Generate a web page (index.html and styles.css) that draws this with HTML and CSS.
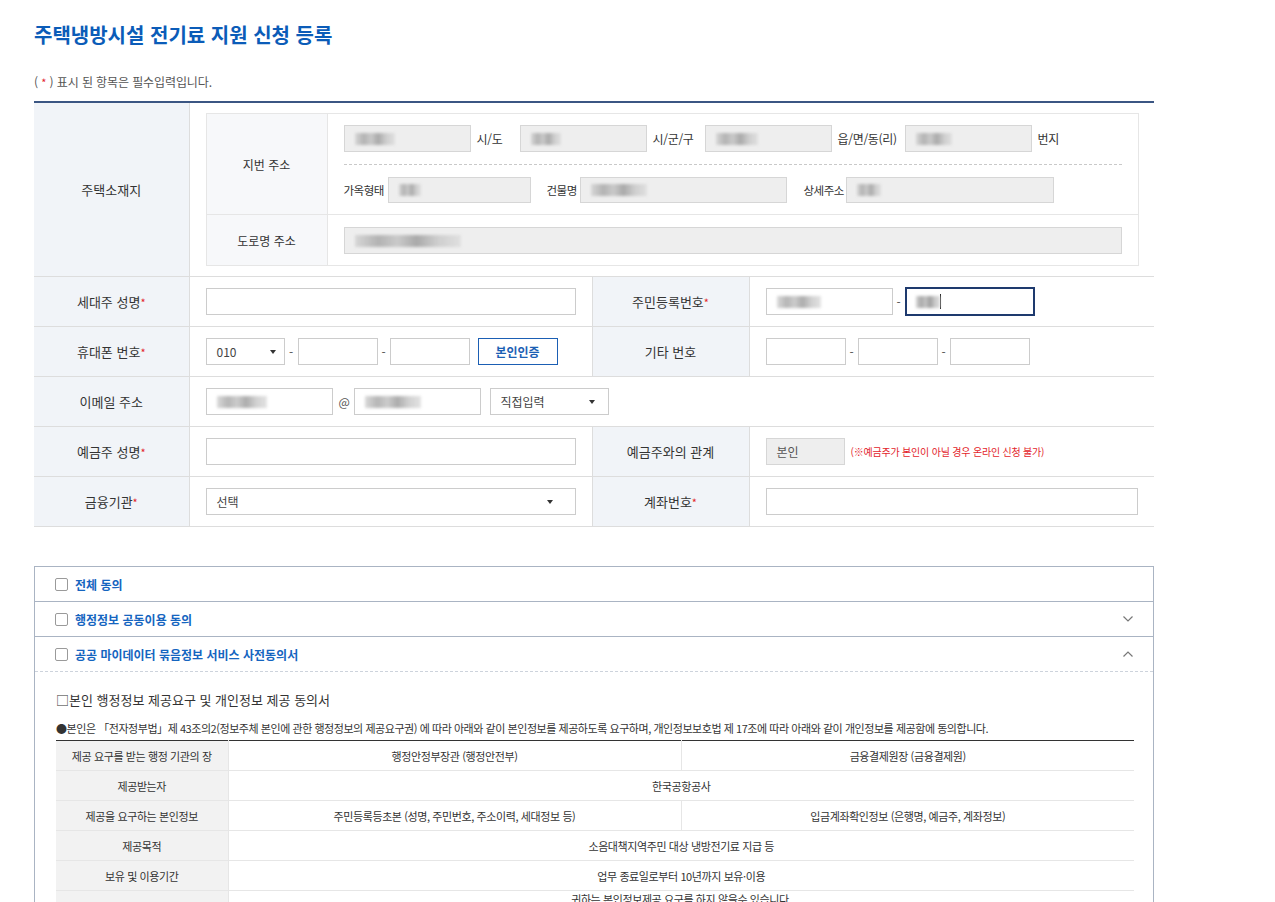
FILE: index.html
```html
<!DOCTYPE html>
<html lang="ko">
<head>
  <meta charset="UTF-8">
  <meta name="viewport" content="width=device-width, initial-scale=1.0">
  <title>주택냉방시설 전기료 지원 신청 등록</title>
  <link rel="stylesheet" href="styles.css">
</head>
<body>
<div class="wrap">
  <h2 class="page-title">주택냉방시설 전기료 지원 신청 등록</h2>
  <p class="req-note">( <span class="req">*</span> ) 표시 된 항목은 필수입력입니다.</p>

  <table class="form-table">
    <colgroup>
      <col class="c-label1">
      <col class="c-cont1">
      <col class="c-label2">
      <col class="c-cont2">
    </colgroup>
    <tr class="addr-row">
      <th>주택소재지</th>
      <td colspan="3" class="addr-wrap">
        <table class="addr-table">
          <colgroup>
            <col class="a-label">
            <col>
          </colgroup>
          <tr>
            <th>지번 주소</th>
            <td class="addr-cell">
              <div class="addr-line">
                <span class="fld ro w127"><i class="blur bw40"></i></span><span class="lbl g1">시/도</span>
                <span class="fld ro w127"><i class="blur bw30"></i></span><span class="lbl g2">시/군/구</span>
                <span class="fld ro w127"><i class="blur bw42"></i></span><span class="lbl g3">읍/면/동(리)</span>
                <span class="fld ro w127"><i class="blur bw36"></i></span><span class="lbl">번지</span>
              </div>
              <div class="addr-sep"></div>
              <div class="addr-line l2">
                <span class="lbl-l g4">가옥형태</span><span class="fld ro w143 short"><i class="blur bw22"></i></span>
                <span class="lbl-l g5">건물명</span><span class="fld ro w207 short"><i class="blur bw56"></i></span>
                <span class="lbl-l g6">상세주소</span><span class="fld ro w208 short"><i class="blur bw24"></i></span>
              </div>
            </td>
          </tr>
          <tr>
            <th>도로명 주소</th>
            <td class="road-cell">
              <span class="fld ro wfull"><i class="blur bw106"></i></span>
            </td>
          </tr>
        </table>
      </td>
    </tr>
    <tr>
      <th>세대주 성명<span class="req">*</span></th>
      <td><input type="text" class="inp w370"></td>
      <th>주민등록번호<span class="req">*</span></th>
      <td>
        <div class="group">
          <span class="fld w127"><i class="blur bw44"></i></span><span class="dash">-</span><span class="fld focus w130"><i class="blur bw24 dark"></i><i class="caret"></i></span>
        </div>
      </td>
    </tr>
    <tr>
      <th>휴대폰 번호<span class="req">*</span></th>
      <td>
        <div class="group">
          <div class="sel w79 pr8"><span>010</span><i class="tri"></i></div><span class="dash wide">-</span><input type="text" class="inp w80"><span class="dash">-</span><input type="text" class="inp w80"><button class="btn-auth">본인인증</button>
        </div>
      </td>
      <th>기타 번호</th>
      <td>
        <div class="group">
          <input type="text" class="inp w80"><span class="dash">-</span><input type="text" class="inp w80"><span class="dash">-</span><input type="text" class="inp w80">
        </div>
      </td>
    </tr>
    <tr>
      <th>이메일 주소</th>
      <td colspan="3">
        <div class="group">
          <span class="fld w127"><i class="blur bw50"></i></span><span class="at">@</span><span class="fld w127"><i class="blur bw56"></i></span><div class="sel w119 pr13 ml9"><span>직접입력</span><i class="tri"></i></div>
        </div>
      </td>
    </tr>
    <tr>
      <th>예금주 성명<span class="req">*</span></th>
      <td><input type="text" class="inp w370"></td>
      <th>예금주와의 관계</th>
      <td>
        <div class="group">
          <span class="fld ro w79 txt">본인</span><span class="warn">(※예금주가 본인이 아닐 경우 온라인 신청 불가)</span>
        </div>
      </td>
    </tr>
    <tr>
      <th>금융기관<span class="req">*</span></th>
      <td><div class="sel w370 pr22"><span>선택</span><i class="tri"></i></div></td>
      <th>계좌번호<span class="req">*</span></th>
      <td><input type="text" class="inp w372"></td>
    </tr>
  </table>

  <div class="agree">
    <div class="agree-head">
      <span class="chk"></span><span class="agree-title">전체 동의</span>
    </div>
    <div class="agree-head">
      <span class="chk"></span><span class="agree-title">행정정보 공동이용 동의</span>
      <svg class="chev" width="10" height="6" viewBox="0 0 10 6"><polyline points="0.5,0.5 5,5 9.5,0.5" fill="none" stroke="#777" stroke-width="1.2"/></svg>
    </div>
    <div class="agree-head open">
      <span class="chk"></span><span class="agree-title">공공 마이데이터 묶음정보 서비스 사전동의서</span>
      <svg class="chev" width="10" height="6" viewBox="0 0 10 6"><polyline points="0.5,5.5 5,1 9.5,5.5" fill="none" stroke="#777" stroke-width="1.2"/></svg>
    </div>
    <div class="agree-body">
      <p class="doc-title">□본인 행정정보 제공요구 및 개인정보 제공 동의서</p>
      <p class="doc-desc">●본인은 「전자정부법」제 43조의2(정보주체 본인에 관한 행정정보의 제공요구권) 에 따라 아래와 같이 본인정보를 제공하도록 요구하며, 개인정보보호법 제 17조에 따라 아래와 같이 개인정보를 제공함에 동의합니다.</p>
      <table class="doc-table">
        <colgroup>
          <col class="d-head">
          <col class="d-cell">
          <col class="d-cell">
        </colgroup>
        <tr>
          <th>제공 요구를 받는 행정 기관의 장</th>
          <td>행정안정부장관 (행정안전부)</td>
          <td>금융결제원장 (금융결제원)</td>
        </tr>
        <tr>
          <th>제공받는자</th>
          <td colspan="2">한국공항공사</td>
        </tr>
        <tr>
          <th>제공을 요구하는 본인정보</th>
          <td>주민등록등초본 (성명, 주민번호, 주소이력, 세대정보 등)</td>
          <td>입금계좌확인정보 (은행명, 예금주, 계좌정보)</td>
        </tr>
        <tr>
          <th>제공목적</th>
          <td colspan="2">소음대책지역주민 대상 냉방전기료 지급 등</td>
        </tr>
        <tr>
          <th>보유 및 이용기간</th>
          <td colspan="2">업무 종료일로부터 10년까지 보유·이용</td>
        </tr>
        <tr class="multi">
          <th>거부 권리 및 불이익</th>
          <td colspan="2">귀하는 본인정보제공 요구를 하지 않을수 있습니다.<br>다만, 동의하지 않을 경우 온라인 신청이 불가하며 방문 또는 우편으로 신청하셔야 합니다.</td>
        </tr>
      </table>
    </div>
  </div>
</div>
</body>
</html>
```

FILE: styles.css
```css
/* page base */
body {
  margin: 0;
  font-family: "Noto Sans CJK KR", "Noto Sans", sans-serif;
  font-size: 12px;
  color: #333;
  background: #fff;
}
.wrap {
  width: 1120px;
  padding: 0 0 60px 34px;
}
.page-title {
  margin: 0;
  padding-top: 21px;
  font-size: 20px;
  line-height: 28px;
  font-weight: 700;
  color: #0b5cb8;
}
.req-note {
  margin: 24px 0 10px;
  font-size: 12px;
  line-height: 18px;
  color: #555;
  letter-spacing: -0.1px;
}
.req {
  color: #e3242b;
  font-size: 11px;
}

/* main form table */
.form-table {
  width: 1120px;
  table-layout: fixed;
  border-collapse: collapse;
  border-top: 2px solid #3b5683;
}
.c-label1 { width: 155px; }
.c-cont1 { width: 403px; }
.c-label2 { width: 157px; }
.c-cont2 { width: 405px; }
.form-table > tbody > tr > th,
.form-table > tbody > tr > td {
  height: 49px;
  border-bottom: 1px solid #dddddd;
  padding: 0 0 0 16px;
}
.form-table > tbody > tr > th {
  background: #f1f4f8;
  font-size: 13px;
  font-weight: 400;
  color: #333;
  padding: 0;
  border-right: 1px solid #dddddd;
  text-align: center;
}
.form-table > tbody > tr > td + th {
  border-left: 1px solid #dddddd;
}
.form-table > tbody > tr.addr-row > td {
  height: auto;
  padding: 10px 15px 10px 16px;
}

/* address box */
.addr-table {
  width: 100%;
  table-layout: fixed;
  border-collapse: collapse;
  border: 1px solid #e6e6e6;
}
.a-label { width: 121px; }
.addr-table th {
  background: #f7f8fa;
  border-right: 1px solid #e6e6e6;
  font-size: 12px;
  font-weight: 400;
  text-align: center;
}
.addr-table tr + tr th,
.addr-table tr + tr td {
  border-top: 1px solid #e6e6e6;
}
.addr-cell {
  padding: 11px 16px 11px;
}
.road-cell {
  padding: 12px 16px 11px;
}
.addr-line {
  display: flex;
  align-items: center;
  height: 27px;
}
.addr-line.l2 {
  height: 26px;
}
.addr-sep {
  margin: 12px 0;
  border-top: 1px dashed #c9c9c9;
}
.lbl {
  box-sizing: border-box;
  padding-left: 6px;
  white-space: nowrap;
  letter-spacing: -0.3px;
}
.lbl.g1 { width: 49px; }
.lbl.g2 { width: 58px; }
.lbl.g3 { width: 73px; }
.lbl-l {
  box-sizing: border-box;
  white-space: nowrap;
  font-size: 11.5px;
  letter-spacing: -0.5px;
}
.lbl-l.g4 { width: 44px; }
.lbl-l.g5 { width: 49px; padding-left: 16px; }
.lbl-l.g6 { width: 59px; padding-left: 17px; }

/* fields */
.fld,
.inp,
.sel {
  box-sizing: border-box;
  display: inline-flex;
  align-items: center;
  height: 27px;
  border: 1px solid #cccccc;
  background: #fff;
  font-family: inherit;
  font-size: 12px;
  color: #333;
  padding: 0 10px;
  margin: 0;
  vertical-align: middle;
}
.fld.ro {
  background: #eeeeee;
  border-color: #d6d6d6;
}
.fld.short { height: 26px; }
.fld.txt { color: #555; }
.fld.focus {
  border: 2px solid #1e3a6e;
  height: 29px;
  padding-left: 9px;
}
.w79 { width: 79px; }
.w80 { width: 80px; }
.w119 { width: 119px; }
.w127 { width: 127px; }
.w130 { width: 130px; }
.w143 { width: 143px; }
.w207 { width: 207px; }
.w208 { width: 208px; }
.w370 { width: 370px; }
.w372 { width: 372px; }
.wfull { width: 100%; }

/* blurred personal data */
.blur {
  display: inline-block;
  height: 12px;
  background: linear-gradient(90deg, #d3d3d3 0%, #a9a9a9 22%, #c4c4c4 40%, #9e9e9e 58%, #c9c9c9 78%, #dedede 100%);
  filter: blur(1.6px);
  opacity: 0.85;
}
.blur.dark { opacity: 1; }
.bw22 { width: 22px; }
.bw24 { width: 24px; }
.bw30 { width: 30px; }
.bw36 { width: 36px; }
.bw40 { width: 40px; }
.bw42 { width: 42px; }
.bw44 { width: 44px; }
.bw50 { width: 50px; }
.bw56 { width: 56px; }
.bw106 { width: 106px; }
.caret {
  display: inline-block;
  width: 1px;
  height: 15px;
  background: #222;
}

.group {
  display: flex;
  align-items: center;
}
.dash {
  width: 12px;
  text-align: center;
  color: #555;
}
.dash.wide { width: 13px; }
.at {
  box-sizing: border-box;
  width: 21px;
  padding-left: 6px;
  color: #555;
  font-size: 12px;
}
.sel {
  justify-content: space-between;
  color: #333;
}
.sel span { color: #444; }
.pr8 { padding-right: 8px; }
.pr13 { padding-right: 13px; }
.pr22 { padding-right: 22px; }
.ml9 { margin-left: 9px; }
.tri {
  width: 0;
  height: 0;
  border-left: 3px solid transparent;
  border-right: 3px solid transparent;
  border-top: 4px solid #333;
}
.btn-auth {
  box-sizing: border-box;
  width: 80px;
  height: 27px;
  margin-left: 8px;
  border: 1px solid #1b5fb4;
  background: #fff;
  color: #1b5fb4;
  font-family: inherit;
  font-size: 12px;
  font-weight: 700;
  padding: 0;
}
.warn {
  margin-left: 6px;
  font-size: 10px;
  letter-spacing: -0.2px;
  color: #e3242b;
  white-space: nowrap;
}

/* agreement panel */
.agree {
  margin-top: 39px;
  border: 1px solid #aab4c3;
}
.agree-head {
  display: flex;
  align-items: center;
  height: 34px;
  padding: 0 20px;
  border-bottom: 1px solid #aab4c3;
}
.agree-head.open {
  border-bottom: 1px dashed #cdd3dc;
}
.chk {
  box-sizing: border-box;
  width: 13px;
  height: 13px;
  border: 1px solid #9a9a9a;
  border-radius: 2px;
  margin-right: 7px;
}
.agree-title {
  font-size: 12px;
  font-weight: 700;
  color: #1565c0;
}
.chev {
  margin-left: auto;
}
.agree-body {
  padding: 0 19px 0 21px;
}
.doc-title {
  margin: 18px 0 0;
  font-size: 13px;
  line-height: 20px;
  color: #333;
}
.doc-desc {
  margin: 10px 0 4px;
  font-size: 11px;
  line-height: 16px;
  color: #333;
  letter-spacing: -0.45px;
  white-space: nowrap;
}
.doc-table {
  width: 100%;
  table-layout: fixed;
  border-collapse: collapse;
  border-top: 1px solid #333;
}
.d-head { width: 172px; }
.doc-table th,
.doc-table td {
  height: 29px;
  padding: 0;
  border-bottom: 1px solid #e6e6e6;
  font-size: 11px;
  font-weight: 400;
  color: #333;
  text-align: center;
  letter-spacing: -0.4px;
}
.doc-table th {
  background: #f2f2f2;
}
.doc-table td {
  border-left: 1px solid #e6e6e6;
}
.doc-table tr.multi td {
  line-height: 16px;
  padding: 0;
}
```
